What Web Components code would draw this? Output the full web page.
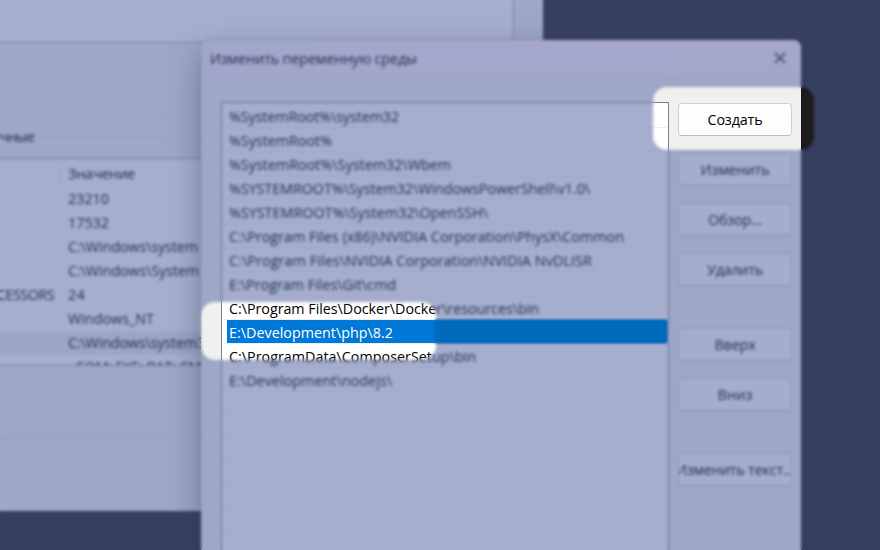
<!DOCTYPE html>
<html lang="ru">
<head>
<meta charset="utf-8">
<title>Изменить переменную среды</title>
<style>
html,body{margin:0;height:100%;overflow:hidden;background:#202122}
</style>
</head>
<body>
<win-desktop></win-desktop>
<script>
const define = (name, html, setup) => {
  const t = document.createElement('template');
  t.innerHTML = html;
  customElements.define(name, class extends HTMLElement {
    connectedCallback() {
      if (this.shadowRoot) return;
      this.attachShadow({mode: 'open'}).append(t.content.cloneNode(true));
      if (setup) setup(this, this.shadowRoot);
    }
  });
};

/* One line of text whose tracking is adjusted to the width given in "w". */
define('ui-text', `<style>
:host{display:inline-block;white-space:pre;flex:none}
span{display:inline-block}
</style><span></span>`, (el, root) => {
  const s = root.querySelector('span');
  s.textContent = el.getAttribute('t');
  const w = +el.getAttribute('w');
  if (w) {
    const n = s.textContent.length;
    s.style.letterSpacing = ((w - s.getBoundingClientRect().width) / n).toFixed(3) + 'px';
  }
});

define('win-button', `<style>
:host{display:flex;align-items:center;justify-content:center;box-sizing:border-box;height:33px;
 background:#fdfdfd;border:1px solid #d0d0d0;border-bottom-color:#bcbcbc;border-radius:4px;overflow:hidden}
</style><slot></slot>`);

define('path-row', `<style>
:host{display:flex;box-sizing:border-box;height:24px;padding:0 0 0 4px;border-bottom:1px solid #ededed}
div{flex:1;display:flex;align-items:center;padding:3px 0 0 2px;box-sizing:border-box;min-width:0}
:host([selected]) div{background:#0078d7;color:#fff}
</style><div><slot></slot></div>`);

define('path-list', `<style>
:host{display:block;width:448px;height:470px;box-sizing:border-box;border:1px solid #7a8191;background:#fff;padding:1px 1px 0 1px;overflow:hidden}
</style><div></div>`, (el, root) => {
  const rows = [
    ['%SystemRoot%\\system32',170],['%SystemRoot%',103],['%SystemRoot%\\System32\\Wbem',222],
    ['%SYSTEMROOT%\\System32\\WindowsPowerShell\\v1.0\\',361],['%SYSTEMROOT%\\System32\\OpenSSH\\',259],
    ['C:\\Program Files (x86)\\NVIDIA Corporation\\PhysX\\Common',395],
    ['C:\\Program Files\\NVIDIA Corporation\\NVIDIA NvDLISR',363],
    ['E:\\Program Files\\Git\\cmd',167],['C:\\Program Files\\Docker\\Docker\\resources\\bin',310],
    ['E:\\Development\\php\\8.2',164],['C:\\ProgramData\\ComposerSetup\\bin',247],
    ['E:\\Development\\nodejs\\',163],['',0],['',0],['',0],['',0],['',0],['',0],['',0]];
  root.querySelector('div').innerHTML = rows.map(([t,w], i) =>
    `<path-row${i===9?' selected':''}>${t?`<ui-text t="${t}" w="${w}"></ui-text>`:''}</path-row>`).join('');
});

define('env-dialog', `<style>
:host{display:flex;flex-direction:column;width:600px;height:560px;background:#f0f0f0;border-radius:8px 8px 0 0;overflow:hidden;
 box-shadow:0 12px 34px rgba(0,0,0,.42),0 0 3px rgba(0,0,0,.3)}
header{height:37px;display:flex;align-items:center;justify-content:space-between;padding:0 15px 0 9px;background:linear-gradient(90deg,#f5effa,#fbf0fb 50%,#fff0f8)}
header svg{margin-top:-1px}
main{display:flex;gap:9px;padding:25px 9px 0 20px}
nav{display:flex;flex-direction:column;gap:17px;width:114px;padding-top:1px}
nav win-button:nth-child(5),nav win-button:nth-child(7){margin-top:25px}
svg{display:block}
</style>
<header><ui-text t="Изменить переменную среды" w="207"></ui-text>
<svg width="12" height="12" viewBox="0 0 12 12"><path d="M.7.7 11.3 11.3M11.3.7.7 11.3" fill="none" stroke="#111" stroke-width="1.3"/></svg></header>
<main><path-list></path-list><nav>
<win-button><ui-text t="Создать" w="55"></ui-text></win-button>
<win-button><ui-text t="Изменить" w="69"></ui-text></win-button>
<win-button><ui-text t="Обзор..." w="54"></ui-text></win-button>
<win-button><ui-text t="Удалить" w="56"></ui-text></win-button>
<win-button><ui-text t="Вверх" w="41"></ui-text></win-button>
<win-button><ui-text t="Вниз" w="35"></ui-text></win-button>
<win-button><ui-text t="Изменить текст..." w="118"></ui-text></win-button>
</nav></main>`);

define('value-row', `<style>
:host{display:grid;grid-template-columns:60px 1fr;height:24px;align-items:center}
:host([selected]){background:#ededed}
.n{display:flex;justify-content:flex-end;padding-right:6px}
.v{padding-left:8px;white-space:nowrap}
:host([inset]) .v{padding-left:12px}
:host([head]) .n{align-self:stretch;border-right:1px solid #e8e8e8;margin-right:-1px}
</style><div class="n"><slot name="name"></slot></div><div class="v"><slot></slot></div>`);

define('env-window', `<style>
:host{display:flex;flex-direction:column;width:543px;height:511px;background:#f0f0f0;overflow:hidden}
.top{width:514px;height:43px;background:#fff;border:solid #a4a4a4;border-width:0 1px 1px 0;box-sizing:border-box}
.gap{height:72px;border-bottom:1px solid #e9e9e9}
.cap{height:42px;display:flex;align-items:center;gap:4px}
.cap i{flex:1;height:1px;background:#e2e2e2}
.tbl{height:208px;box-sizing:border-box;background:#fff;border:solid #999ca2;border-width:1px 0;padding-top:3px;overflow:hidden}
value-row[head]{margin-bottom:.5px}
.low{height:72px;border-bottom:1px solid #dfdfdf}
</style>
<div class="top"></div><div class="gap"></div>
<div class="cap"><ui-text t="чные" w="34"></ui-text><i></i></div>
<div class="tbl">
<value-row head><ui-text t="Значение" w="67"></ui-text></value-row>
<value-row><ui-text t="23210" w="41"></ui-text></value-row>
<value-row><ui-text t="17532" w="41"></ui-text></value-row>
<value-row><ui-text t="C:\\Windows\\system" w="130"></ui-text></value-row>
<value-row><ui-text t="C:\\Windows\\System" w="131"></ui-text></value-row>
<value-row><ui-text slot="name" t="CESSORS" w="57"></ui-text><ui-text t="24" w="17"></ui-text></value-row>
<value-row><ui-text t="Windows_NT" w="86"></ui-text></value-row>
<value-row selected><ui-text t="C:\\Windows\\system3" w="137"></ui-text></value-row>
<value-row inset><ui-text t=".COM;.EXE;.BAT;.CM" w="129"></ui-text></value-row>
</div><div class="low"></div>`);

/* Blurred, tinted layer with two soft rounded openings. */
define('focus-veil', `<style>
:host{position:absolute;inset:0}
.v{position:absolute;inset:0;background:rgba(75,93,155,.5);backdrop-filter:blur(1.8px)}
.b{position:absolute;left:435px;top:320px;width:232px;height:23px;background:#006abc;filter:blur(1px);border-radius:0 2px 2px 0}
</style><div class="v"></div><div class="b"></div>`, (el, root) => {
  const hole = (x,y,w,h) => `<rect x="${x}" y="${y}" width="${w}" height="${h}" rx="14" fill="black" filter="url(#s)"/>`;
  const svg = `<svg xmlns="http://www.w3.org/2000/svg" width="880" height="550"><filter id="s" x="-10%" y="-20%" width="120%" height="140%"><feGaussianBlur stdDeviation="1.5"/></filter><mask id="m" maskUnits="userSpaceOnUse" x="0" y="0" width="880" height="550"><rect width="880" height="550" fill="white"/>${hole(653,87,161,63)}${hole(201,302,235,58)}</mask><rect width="880" height="550" fill="white" mask="url(#m)"/></svg>`;
  root.querySelector('.v').style.maskImage = `url("data:image/svg+xml,${encodeURIComponent(svg)}")`;
});

define('win-desktop', `<style>
:host{display:block;position:relative;width:880px;height:550px;overflow:hidden;background:#232323;color:#000;font:14.3px/20px "Open Sans","Noto Sans",sans-serif}
env-window{position:absolute;left:0;top:0}
env-dialog{position:absolute;left:201px;top:40px}
</style><env-window></env-window><env-dialog></env-dialog><focus-veil></focus-veil>`);
</script>
</body>
</html>
